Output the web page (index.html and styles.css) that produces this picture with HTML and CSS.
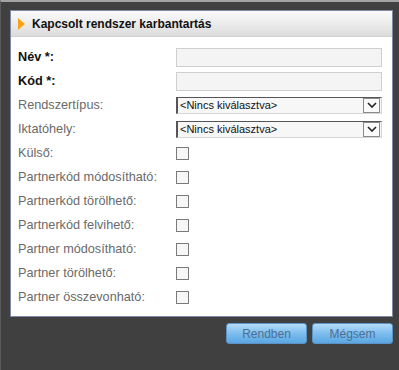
FILE: index.html
```html
<!DOCTYPE html>
<html lang="hu">
<head>
<meta charset="UTF-8">
<title>Kapcsolt rendszer karbantartás</title>
<link rel="stylesheet" href="styles.css">
</head>
<body>
<div class="window">
    <div class="panel">
        <div class="panel-header">
            <span class="marker"></span>
            <span class="panel-title">Kapcsolt rendszer karbantartás</span>
        </div>
        <form class="form">
            <label class="field-label required">Név *:</label>
            <div class="field"><input class="text-input" type="text"></div>

            <label class="field-label required">Kód *:</label>
            <div class="field"><input class="text-input" type="text"></div>

            <label class="field-label">Rendszertípus:</label>
            <div class="field">
                <div class="select-box">
                    <select class="select"><option>&lt;Nincs kiválasztva&gt;</option></select>
                    <span class="select-arrow"><svg width="10" height="6" viewBox="0 0 10 6"><path d="M1 1 L5 5 L9 1" fill="none" stroke="#222" stroke-width="1.6"/></svg></span>
                </div>
            </div>

            <label class="field-label">Iktatóhely:</label>
            <div class="field">
                <div class="select-box">
                    <select class="select"><option>&lt;Nincs kiválasztva&gt;</option></select>
                    <span class="select-arrow"><svg width="10" height="6" viewBox="0 0 10 6"><path d="M1 1 L5 5 L9 1" fill="none" stroke="#222" stroke-width="1.6"/></svg></span>
                </div>
            </div>

            <label class="field-label">Külső:</label>
            <div class="field"><input class="check" type="checkbox"></div>

            <label class="field-label">Partnerkód módosítható:</label>
            <div class="field"><input class="check" type="checkbox"></div>

            <label class="field-label">Partnerkód törölhető:</label>
            <div class="field"><input class="check" type="checkbox"></div>

            <label class="field-label">Partnerkód felvihető:</label>
            <div class="field"><input class="check" type="checkbox"></div>

            <label class="field-label">Partner módosítható:</label>
            <div class="field"><input class="check" type="checkbox"></div>

            <label class="field-label">Partner törölhető:</label>
            <div class="field"><input class="check" type="checkbox"></div>

            <label class="field-label">Partner összevonható:</label>
            <div class="field"><input class="check" type="checkbox"></div>
        </form>
    </div>
    <div class="buttons">
        <button class="dialog-button" type="button">Rendben</button>
        <button class="dialog-button" type="button">Mégsem</button>
    </div>
</div>
</body>
</html>
```

FILE: styles.css
```css
html, body {
    margin: 0;
    height: 100%;
}
body {
    font-family: "Liberation Sans", Arial, sans-serif;
    background-color: #404040;
    border-top: 2px solid #a3a3a3;
    border-left: 1px solid #5a5a5a;
    box-sizing: border-box;
}
.window {
    padding: 8px 6px 0 9px;
}
.panel {
    background-color: #fff;
    border: 1px solid #7f8aa6;
}
.panel-header {
    display: flex;
    align-items: center;
    gap: 7px;
    height: 25px;
    padding-left: 7px;
    background: linear-gradient(#fbfbfb, #dcdcdc);
    border-bottom: 1px solid #d0d0d0;
}
.marker {
    width: 0;
    height: 0;
    border-top: 6px solid transparent;
    border-bottom: 6px solid transparent;
    border-left: 7px solid #f5a418;
}
.panel-title {
    font-size: 12px;
    font-weight: bold;
    color: #111;
}
.form {
    display: grid;
    grid-template-columns: 158px 1fr;
    grid-auto-rows: 24px;
    padding: 8px 10px 7px 7px;
    margin: 0;
}
.field-label {
    display: flex;
    align-items: center;
    font-size: 12.7px;
    color: #6a6a6a;
}
.field-label.required {
    font-weight: bold;
    color: #111;
}
.field {
    display: flex;
    align-items: center;
}
.text-input {
    width: 100%;
    height: 19px;
    box-sizing: border-box;
    border: 1px solid #cfcfcf;
    background-color: #f4f4f4;
    margin: 0;
    padding: 0 3px;
}
.select-box {
    display: flex;
    align-items: center;
    width: 100%;
    height: 17px;
    box-sizing: border-box;
    border-style: solid;
    border-width: 1px 1px 1px 2px;
    border-color: #555 #d6d6d6 #d6d6d6 #555;
    background-color: #f7f7f7;
}
.select {
    flex: 1;
    appearance: none;
    -webkit-appearance: none;
    border: none;
    background: transparent;
    font-family: "Liberation Sans", Arial, sans-serif;
    font-size: 11px;
    color: #111;
    padding: 0 0 0 2px;
    margin: 0;
    height: 15px;
    outline: none;
}
.select-arrow {
    display: flex;
    align-items: center;
    justify-content: center;
    width: 15px;
    height: 13px;
    margin-right: 1px;
    border: 1px solid #8a8a8a;
    background-color: #fafafa;
}
.check {
    appearance: none;
    -webkit-appearance: none;
    width: 13px;
    height: 13px;
    margin: 0;
    border: 1px solid #7a7a7a;
    background-color: #f6f6f6;
}
.buttons {
    display: flex;
    justify-content: flex-end;
    gap: 5px;
    margin-top: 6px;
}
.dialog-button {
    width: 81px;
    height: 21px;
    padding: 0;
    font-family: "Liberation Sans", Arial, sans-serif;
    font-size: 12px;
    color: #4d6f92;
    background: linear-gradient(#b3dcf8, #7dbdee 50%, #5aa6e4);
    border: 1px solid #5b94c4;
    border-radius: 3px;
    cursor: pointer;
}
```
